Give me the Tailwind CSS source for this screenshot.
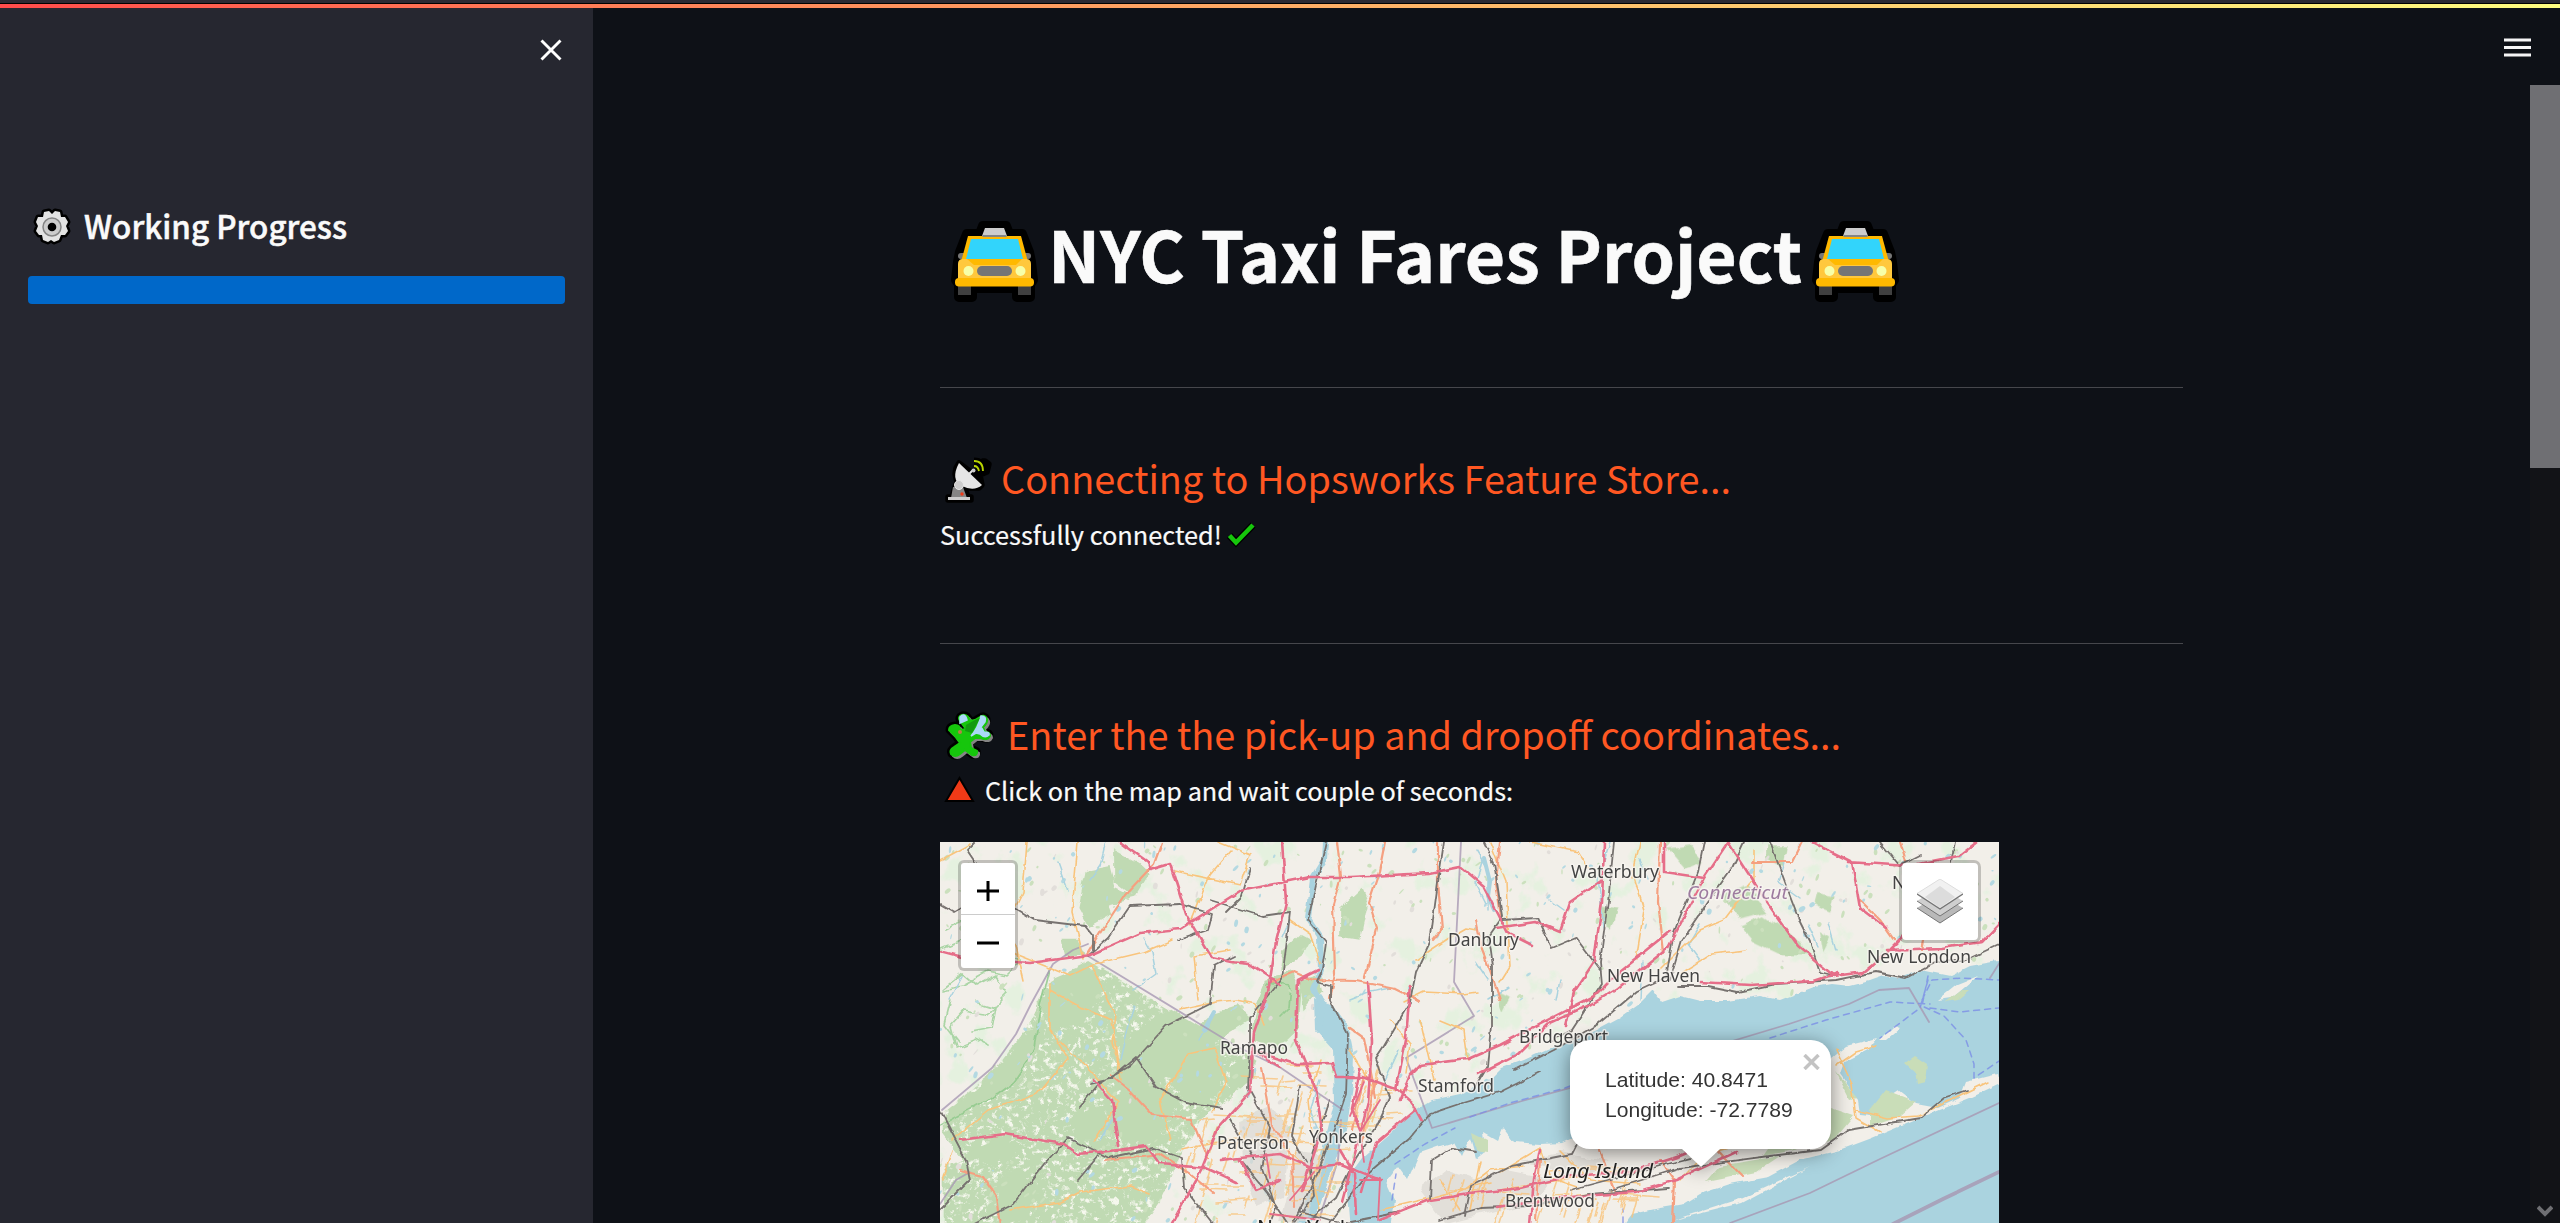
<!DOCTYPE html>
<html lang="en">
<head>
<meta charset="utf-8">
<title>NYC Taxi Fares Project</title>
<script src="https://cdn.jsdelivr.net/npm/@tailwindcss/browser@4"></script>
</head>
<body class="h-[1223px] w-[2560px] overflow-hidden bg-[#0e1117] font-['Noto_Sans_CJK_SC','Noto_Sans',sans-serif] text-[#fafafa]">
<svg width="0" height="0" class="absolute">
  <symbol id="taxi" viewBox="0 0 90 82" overflow="visible">
    <path d="M34 8h23l3 8h13l7 18 2 10 2 18-3 4v13H68V70H23v9H10V66l-3-4 2-18 2-10 7-18h13z" fill="#000" stroke="#000" stroke-width="10" stroke-linejoin="round"/>
    <path fill="#404040" d="M9 65h13v12H9zM69 65h13v12H69z"/>
    <rect x="9" y="35" width="9" height="6" rx="3" fill="#777"/><rect x="73" y="35" width="9" height="6" rx="3" fill="#777"/>
    <path fill="#ffb900" d="M19 18h53l7 26H12z"/><path fill="#32d4fb" d="M22 21h47l5 20H17z"/>
    <path fill="#ffc83d" d="M9 46q0-5 5-5h63q5 0 5 5v17H9z"/><path fill="#ffb900" d="M18 41h55l-6 6H25z"/>
    <rect x="6" y="60" width="79" height="8.500" rx="4" fill="#ffb900"/>
    <rect x="28" y="48" width="35" height="10" rx="5" fill="#757575"/><circle cx="19.500" cy="53" r="5" fill="#f7ffa8"/><circle cx="71.500" cy="53" r="5" fill="#f7ffa8"/>
    <path fill="#ccc" d="M36 10h19l3 8H33z"/><path fill="#858585" d="M33.500 17h24v2h-24z"/>
  </symbol>
</svg>
<div class="flex h-[8px] flex-col">
  <div class="h-[3px] bg-[#2b2a33]"></div><div class="h-px bg-black"></div>
  <div class="h-[4px] bg-linear-to-r from-[#ff4b4b] to-[#fffd80]"></div>
</div>
<div class="flex h-[1215px]">
  <aside class="flex w-[593px] shrink-0 flex-col bg-[#262730] px-[28px]">
    <div class="flex justify-end pt-[31px] pr-[3px]"><svg width="22" height="22" viewBox="0 0 22 22" fill="none" stroke="#fff" stroke-width="2.900" ><path d="M1.500 1.500l19 19M20.500 1.500l-19 19"/></svg></div>
    <div class="mt-[140px] flex h-[52px] items-center pl-[5px]">
      <svg width="38" height="38" viewBox="0 0 38 38"><path d="M11 4l5-1 3 3 3-3 5 1 1 5h4l3 5-2 4 2 5-3 4h-4l-2 5-5 2-3-2-3 2-5-2-1-5H6l-3-4 2-5-2-4 2-5h5z" stroke="#000" stroke-width="5" stroke-linejoin="round"/><path d="M11 4l5-1 3 3 3-3 5 1 1 5h4l3 5-2 4 2 5-3 4h-4l-2 5-5 2-3-2-3 2-5-2-1-5H6l-3-4 2-5-2-4 2-5h5z" fill="#e3e3e3"/><circle cx="19" cy="19" r="9" fill="#ccc" stroke="#858585" stroke-width="1.500"/><circle cx="19" cy="19" r="4.300" fill="#000"/></svg>
      <svg class="ml-[13px] overflow-visible" width="280" height="52"><text x="0" y="38" font-size="32" font-weight="500" textLength="263" lengthAdjust="spacingAndGlyphs" fill="#fafafa" stroke="#fafafa" stroke-width=".5">Working Progress</text></svg>
    </div>
    <div class="mt-[23px] h-[28px] rounded-[4px] bg-[#0068c9]"></div>
  </aside>
  <main class="flex w-[1937px] flex-col pl-[347px]">
    <h1 class="mt-[200px] flex h-[100px] items-start">
      <svg class="mt-[10px] ml-[9px] overflow-visible" width="90" height="82"><use href="#taxi"/></svg>
      <svg class="ml-[9px] overflow-visible" width="758" height="100"><text x="0" y="75" font-size="70" font-weight="700" textLength="754" lengthAdjust="spacingAndGlyphs" fill="#fafafa" stroke="#fafafa" stroke-width=".6">NYC Taxi Fares Project</text></svg>
      <svg class="mt-[10px] ml-[4px] overflow-visible" width="90" height="82"><use href="#taxi"/></svg>
    </h1>
    <div class="mt-[79px] h-px w-[1243px] bg-[#46474c]"></div>
    <div class="mt-[62px] flex h-[60px]">
      <svg width="60" height="60" viewBox="0 0 60 60"><path d="M8 47h4l3-10 2-5-2-8 1-6 3-5 12 9 6-1 8-1-2-9h2l4 3-2 8-7 3 2 10-3 3-11 0-3 1 3 8h3v3H8z" fill="#000" stroke="#000" stroke-width="5.500" stroke-linejoin="round"/><path d="M34 11q9 0 9 10" stroke="#000" fill="none" stroke-width="7"/><path d="M19 13q-9 17 3 23t20-1z" fill="#e6e6e6"/><path d="M27 26l6-6" stroke="#e6e6e6" stroke-width="2"/><circle cx="33.500" cy="20.500" r="2" fill="#ccc"/><path d="M34 11q9 0 9 10M34 16q4 0 5 5" fill="none" stroke="#bbd600" stroke-width="1.800"/><path d="M13 37h10l4 11H11z" fill="#858585"/><circle cx="19" cy="35" r="4.500" fill="#ccc" stroke="#e6e6e6" stroke-width="1"/><circle cx="22" cy="44" r="1.700" fill="#f03a17"/><path d="M8 47h22v3H8z" fill="#ccc"/></svg>
      <svg class="overflow-visible" width="760" height="60"><text x="1" y="44" font-size="38" textLength="730" lengthAdjust="spacingAndGlyphs" fill="#ff5722">Connecting to Hopsworks Feature Store...</text></svg>
    </div>
    <div class="mt-[5px] flex h-[45px]">
      <svg class="overflow-visible" width="286" height="45"><text x="0" y="30" font-size="25" textLength="282" lengthAdjust="spacingAndGlyphs" fill="#fafafa" stroke="#fafafa" stroke-width=".2">Successfully connected!</text></svg>
      <svg width="34" height="45" fill="none"><path d="M3.500 20.500L10 27.500 27 10" stroke="#000" stroke-width="7"/><path d="M3.500 20.500L10 27.500 27 10" stroke="#16c60c" stroke-width="4.500"/></svg>
    </div>
    <div class="mt-[83px] h-px w-[1243px] bg-[#46474c]"></div>
    <div class="mt-[61px] flex h-[60px]">
      <svg width="66" height="60" viewBox="0 0 66 60"><defs><path id="pz" d="M9 25q0-4 6-5 5 0 5 5l6-1-6-8q-3-4 2-6 6-1 8 6l5-1 5-3q5-3 7 2 1 4-4 8l2 5q5 0 5 4-2 5-9 2l-6 0-5 4 1 6 6 3q1 5-5 4l-7-5-5 4q-5 4-9 0-2-4 3-7l6-4-5-7z"/></defs><use href="#pz" stroke="#000" stroke-width="7" stroke-linejoin="round"/><use href="#pz" fill="#858585" stroke="#858585" stroke-width="2" x="2" y="2"/><use href="#pz" fill="#16c60c" stroke="#16c60c" stroke-width="2"/><path d="M20 12q5-5 7 3l-7 3zM41 11q6 0 4 6l-4 5 3 5q6 0 5 3-4 4-9-1l-4-1-5 3q7-8 10-20z" fill="#abd9f7" stroke="#abd9f7" stroke-width="1.500"/><path d="M26 20l9-5 5-2-8 15-7-2z" fill="#129a10"/><circle cx="20" cy="27" r="2" fill="#b97f48"/></svg>
      <svg class="overflow-visible" width="860" height="60"><text x="1" y="45" font-size="38" textLength="834" lengthAdjust="spacingAndGlyphs" fill="#ff5722">Enter the the pick-up and dropoff coordinates...</text></svg>
    </div>
    <div class="mt-[5px] flex h-[40px]">
      <svg width="44" height="40"><path d="M19.500 8L33 31H6z" fill="#f03a17" stroke="#000" stroke-width="2"/></svg>
      <svg class="overflow-visible" width="540" height="40"><text x="1" y="31" font-size="25" textLength="528" lengthAdjust="spacingAndGlyphs" fill="#fafafa" stroke="#fafafa" stroke-width=".2">Click on the map and wait couple of seconds:</text></svg>
    </div>
    <div class="relative mt-[32px] h-[381px] w-[1059px] shrink-0 overflow-hidden bg-[#f2efe9]">
<svg width="1059" height="381" viewBox="940 842 1059 381" fill="none" stroke-linejoin="round" stroke-linecap="round">
<defs>
<filter id="rough" x="-5%" y="-5%" width="110%" height="110%"><feTurbulence type="fractalNoise" baseFrequency=".04" numOctaves="4" seed="4"/><feDisplacementMap in="SourceGraphic" scale="11" xChannelSelector="R" yChannelSelector="G"/></filter>
<filter id="wiggle" x="-5%" y="-5%" width="110%" height="110%"><feTurbulence type="fractalNoise" baseFrequency=".07" numOctaves="3" seed="8"/><feDisplacementMap in="SourceGraphic" scale="5" xChannelSelector="R" yChannelSelector="G"/></filter>
<filter id="grain" x="0" y="0" width="100%" height="100%"><feTurbulence type="fractalNoise" baseFrequency=".06" numOctaves="5" seed="12"/><feColorMatrix values="0 0 0 0 .92  0 0 0 0 .94  0 0 0 0 .85  5 0 0 0 -2.750"/><feComposite in2="SourceAlpha" operator="in"/><feMerge><feMergeNode in="SourceGraphic"/><feMergeNode/></feMerge></filter>
<filter id="patch" x="0" y="0" width="100%" height="100%"><feTurbulence type="fractalNoise" baseFrequency=".035 .03" numOctaves="5" seed="21"/><feColorMatrix values="0 0 0 0 .78  0 0 0 0 .88  0 0 0 0 .74  0 8 0 0 -4.700"/><feComposite in2="SourceAlpha" operator="in"/></filter>
</defs>
<rect x="940" y="842" width="1059" height="381" fill="#f2efe9"/>
<g filter="url(#patch)"><rect x="940" y="842" width="1059" height="381" fill="#fff"/></g>
<!-- woodland -->
<g filter="url(#rough)"><g transform="translate(932 832) scale(.35714 .33333)" fill="#c0dab3">
 <g filter="url(#grain)"><path d="M30 840L170 720 260 600 330 450 440 390 820 630 910 690 900 740 830 800 760 850 700 960 640 1100 580 1190H30V1000l60-20-60-80z"/></g>
 <path d="M340 440l90-40 50 60-60 110-80 30-30-80zM560 600l110-70 140 90-40 60-120 60-70 70-80-60zM510 790l90-60 90 80-60 120-100 10-30-90zM660 720l60-70 90 10 0 120-60 50-70-60zM30 850l130-110 110-130 50-70-20 120-120 130-140 80zM390 860l90-40 40 90-110 20zM430 120l70-15 15 60 60 30-80 20 10 30-65 40-30-60zM510 55l70 40 30 30-40 70-60-50zM980 350l50-50 35 20-30 60-60 40zM940 440l70-20 25 60-10 110-60 60-70-30 15-100zM1030 440l50-15 10 50-50 60zM1140 230l60-60 20 50-20 100-60-10zM360 320l50 0 20 50-60 10zM100 960l90-40 50 30-80 50zM180 1060l60-40 60 60-40 80-70 20z"/>
 <path d="M740 590l50-50 60-20 40 40-60 40-20 30zM840 700l60-20 0 60-60 40z"/>
</g>
<g transform="translate(1472 832) scale(.34439 .33333)" fill="#c0dab3"><path d="M860 40h60l-10 60-50-20zM720 190l80-30 60 80-80 20zM780 280l70-30 70 50 60 70-80 0-80-40zM370 220l50 10-20 60-30-20zM70 480l40 20-20 40zM1000 180l50 10-10 50-50-20zM1010 300l30 20-20 40zM570 50l60-10 40 50-50 20z"/></g></g>
<g fill="none" filter="url(#rough)" stroke="#9fd09a" stroke-width="1.700" opacity=".85"><path d="M942 950l20-8 20 12 24-6 16 14-14 14-20-4-26 14-18 4M944 988l18-14 14 12 20-10 12 18-20 20-24-4-14 16 6 22 20-8 12 6M950 1000l-6 24 14 18M976 1000l20 6-4 22-22 4M945 930l20-10 24 10 18-4"/><path d="M1050 970l-12 50-4 30-20 30-30 22-44 24M1270 982l20 4-2 22-10 10" stroke="#8fc98b"/></g>
<g id="specks"></g>
<!-- water -->
<g filter="url(#wiggle)" fill="#aad3df">
<path d="M1392 1132L1414 1111 1432 1100 1460 1094 1490 1080 1502 1068 1524 1060 1548 1049 1570 1042 1596 1030 1620 1017 1640 1003 1653 990 1662 1002 1680 996 1700 1001 1728 1001 1760 996 1780 1000 1814 987 1832 984 1850 986 1870 981 1884 976 1900 978 1920 970 1950 976 1970 966 2004 960V1230H1350L1346 1180 1362 1158z"/>
<path d="M1314 998l20 8 14 20 6 30-1 30-6 40-12 36-16 46-14 26 -12 0 20-50 12-44 10-40-2-50-18-20z"/>
</g>
<!-- Long Island, its forks and the barrier beaches -->
<g filter="url(#wiggle)">
<path fill="#f2efe9" d="M1390 1230L1394 1200 1386 1182 1398 1166 1408 1180 1420 1153 1440 1146 1454 1142 1462 1156 1470 1138 1476 1158 1486 1150 1484 1132 1498 1140 1503 1128 1514 1142 1540 1144 1563 1143 1590 1130 1640 1110 1700 1080 1780 1066 1826 1062 1846 1046 1878 1038 1868 1050 1844 1062 1840 1074 1858 1100 1860 1114 1880 1116 1886 1098 1898 1090 1916 1104 1938 1108 1960 1098 1966 1082 1998 1074 2000 1084 1970 1098 1920 1118 1872 1138 1840 1150 1800 1160 1768 1177 1730 1184 1700 1194 1684 1204 1660 1208 1632 1214 1620 1230z"/>
<path fill="#f2efe9" d="M1670 1221l70-22 70-32-68 36zM1938 1000l20-16 20-8-26 22zM1880 1040l14-14 6 2-14 12z"/>
<path fill="#c9ddb8" d="M1905 1063l10-7 12 8-2 18-8 2-2-12zM1870 1110l16-20 30 12-16 14-30 10zM1790 1120l40-12 24 8-20 24-50 12-20 4zM1472 1132l16 8 0 12-12-2zM1836 1072l22 26-8 2zM1720 1166l60-10-24 16-50 10zM1946 1002l16-12 8 0-12 10z"/>
</g>
<g fill="#dcd9d3" opacity=".7" filter="url(#rough)"><path d="M1240 1120l30-14 20 30-8 60-24 10-14-30zM1420 1190l26-20 30 10 30-10 50 10-30 24-80 20zM1295 1150l30 6-20 66h-26zM1520 1160l40-8 50 10-30 14z"/></g>
<!-- rivers and boundaries -->
<g stroke="#aad3df" filter="url(#wiggle)"><path stroke-width="6" d="M1325 842l-1 18-11 18-5 40 12 18 1 35-8 18 11 16-5 20"/><path stroke-width="1.500" d="M1106 842l-6 24-10 14M1134 990l22-16-4-22-8-14M1120 1060l6-28 8-26M1200 1040l12-22M1100 1140l14-24M1290 920l-8 18M1476 850l12 20 0 40M1488 980l-12-18M1550 900l14 10M1610 842l-12 36 6 50M1640 1000l2-38M1784 862l-6 20 22 16M1808 924l10 22M1836 950l-8-28M1350 1000l20-8 20-4M1700 960l-12-16 12-20M1640 860l8 20M1488 1000l20-12M950 1000l12-22M1068 890l-10-28M1320 1080l-10 30 8 20M1398 1050l-14 30M1482 860l-6 24 10 20M1560 980l-4 20M1000 870l-4 22"/></g>
<path d="M1484 858l6 24-2 14 6 14M1204 1030l10-18" stroke="#aad3df" stroke-width="4"/>
<g stroke="#a898b3" opacity=".8" stroke-width="1.800"><path d="M1088 956l148 90 45 22 62 42M1461 842l-7 140 20 34-68 42 26 70 90-27 107-29 160-48 60-20 30-14 30-2 20 34M2000 962l-10 16M942 1110l50-42 24-34 15-30 22-40 20-14 15-6M940 1204l16-24 14-8M1730 1223l80-30 70-34 119-56"/><path stroke-width="3.800" d="M1893 1224l50-25 56-27"/><path d="M1341 1120l-3 40-20 63" stroke-width="2"/></g>
<g stroke="#7c8ee6" stroke-width="1.500" stroke-dasharray="6 5" opacity=".8"><path d="M1470 1117l40-14 55-15 64-25M1770 1038l56-18 64-18 40 2M1928 980l-8 28-40 30M1928 976l-6 30 22 10 22 24 8 24 0 14 25-17M1930 1008l30 4 39-4M1395 1164l30-20 30-16M1922 1000l10-20 30-2 37 2M1623 1223v-14M1392 1200l4-26"/></g>
<!-- local roads -->
<g stroke="#f9c47c" stroke-width="1.600" filter="url(#wiggle)"><g id="streets" opacity=".8"></g>
<path d="M1027 842l-4 50-14 28 14 60M1078 842l-6 70 12 46M940 860l30-16M980 958l30-6 60 24 24-12 50-12 28-12M1050 984l0 46 18 28-30 36-50 16-36 30M1092 965l24 50-4 28 10 30M1060 1042l32 30 26 30-24 40M1050 990l32 18 30 12 8 60M1170 1140l-10-40 28-46 26-6 12 34-14 30M1174 871l66 14 10-30-32-13M1190 925l20-50 20-24M1180 1010l36-8 20-2 20 4 8 20M1198 1000l-4-44 36-6M1322 1060l-14 40 6 50M1350 1050l24 40M1404 1002l20-10 40 2 14-2M1416 960l36-24 14-8 10 2M1490 842l16 40 4 84-10 16M1530 842l48 10 10 16M1632 870l12 40-8 50M1640 842l-8 36M1660 970l40-40 24-10 30-40 0-30M1680 974l32-20 34-4M1836 1050l16 34 4 34 24 14M1836 1066l20-14 20-6M1856 1110l32 8 30-2 70-34M1500 1172l40-24 10 30 30 10M1450 1200l40-30 34-4M1500 1190l120-20M1380 1210l50-12 60-16M1264 1130l46 40 10 40M1180 1150l50-10M1010 1210l50-8 20-10 50-6 20 8M1420 1020l14 60M1440 1020l24 10 4 30M1680 1180l26-26 30-8M1290 920l20 14 10 30M1390 1020l20 24-4 30M942 1180l10-30M1440 1180l20 30M1480 1160l-10 50M1560 1150l30 30 50 4"/></g>
<g stroke="#f5a080" stroke-width="2.200" filter="url(#wiggle)"><path d="M1162 842l-8 22-28 30-24 36-16 26M1337 842l4 34-8 28 2 70-6 24M1385 842l-6 30-10 30 8 26-12 50M1270 982l24-10 18 8 44 1 40 8 24 12M1110 1075l20 16 22 24 40 4 16 40M1438 842l0 40 4 48-8 10M1500 842l-4 40 6 40M1660 842l-2 60 6 50M1752 862l40 0 10-20M1860 900l20 20 14 20M960 1170l22 6 14 20 4 30M1262 1066l10 60 20 30 2 50M1660 1160l14 20-2 42M1540 1160l-4 60M1600 1150l14 40M1350 1028l14 10 6 30 6 30M1476 920l6 30 8 20 10 30M1708 1140l34 36M1104 1160l56-6 30 20 24 20M1900 842l6 20M1362 1080l-10 50M1376 1080l-14 60M1920 950l4-20"/></g>
<!-- railways -->
<g stroke="#77726f" stroke-width="1.800" filter="url(#wiggle)"><path d="M975 842l-8 8 8 12 40 46 20 12 50 6 8 10 0 14M940 904l14 8 10-6M1088 956l20-18 22-32 50-2 32 10-4 16-30 10M1226 912l16-16 8-28M1210 900l52 16 28-4 -4 36-4 30-32 40 0 30-2 40 22 40-8 40 14 40-8 20M1326 842l-18 78 18 22-4 28-6 12 14 4 0 14 18 34-2 60-12 36-22 56-24 46M1234 956l-20 10-4 38-44 22-36 40-34 20-18 22M1090 1084l20-5 26-22 20 30 30 16 36 6M940 1110l26 50 4 20-30 30M974 1224l40-20 30-40 24-26 40 20 46-10 28 10 2 30 30 38M1078 1180l20-24M1444 842l-6 40-8 60-14 30-6 30-26 44-8 12 14 40-14 30-20 30-20 40-36 30M1540 1072l-40 20-40 12-30 10-22 26-40 34-40 52M1484 842l10 20 8 54-14 20 4 30 0 60-4 40-12 20M1502 920l36-2 14 30 24-10 24 32M1614 842l-6 60-8 60 2 22-30 46-20 10M1704 842l-6 30-24 60-8 46-30 14-38 32-44 26-40 20M1670 980l12-40 30-44 20-28 12-26M1770 842l30 80 10 20 10 30 16 4M1678 986l30 0 30 6 38-8 60-4 40-8 30 6 30-16 30-2 34-16M1880 842l20 24 20-10M1955 842l-4 20M1430 1200l2-40 20-12 24 4M1465 1216l6-30 40-20 60-12 10-20M1570 1190l60-16 60-16M1610 1190l70-22 90-12 50-6 28-20 72-12 24-20 24-8M1440 1220l40-12 50-2 60-12 80-6M1300 1086l-8 50 14 26M1330 1100l-20 60 4 36-20 28M1240 1160l28 34 20 30M1230 1120l24 40M1300 1212l40 12 60-12"/></g>
<!-- motorways -->
<g stroke="#e66e89" stroke-width="2.600" filter="url(#wiggle)"><path d="M1120 842l28 20 2 8 20-6 16 50 26 44 18 4 20 2 30 20M940 951l30 8 60 4 60-8 50-22 40-4 60-38 70-14 40 0 80-4 30-6 24 20 24 46 24 12M1282 842l4 60-10 40-8 50-14 40-4 60-32 36-16 40-24 44-32 60M960 1140l44-6 60 10 14 10 40-4 28-4 14 18 46 4 30 14M1094 1080l18 20 6 46M1280 1067l-24-15M1318 970l-20 10-2 60 20 50 6 40-20 60M1260 1053l36 11 36-1 4 14 26 0 34 12 16 14 10 18M1368 982l4 60-4 60-10 40-16 60M1400 1100l10-25 10-10 48-6 32-14 46-24 50-26 24-24 50-40M1410 985l-4 55-10 50M1496 928l40-6 24 10 10-30 32-22M1604 842l-2 60-8 60-20 30-8 34M1664 842l0 30 40 6 24-36M1704 878l-36 70-50 40-26 16-44 20-30 30-40 20M1728 842l40 62 30 42 36 30 30-4 26-22 20-20M1700 982l50 3 64-4 24-8M1812 842l40 20 8 46 26 20M1848 862l60 4 50-10 18-14M1886 950l56-2 40-6 17-18M1380 1220l50-20 40-6 50-6 50-12 60-4 50-16 40-18 50-6M1496 1208l60-10 80-6 40-12 60-28M1340 1150l14 24 2 40M1240 1160l16 30 24-10M1220 1160l60-6 30 14 30-4 40 16M1416 1109l-40 34-14 50M1540 1150l-6 30-4 44M1360 1070l-8 40 8 20"/></g>
<g stroke="#e66e89" stroke-width="1.800"><path d="M1266 1154l4 24M1290 1200l24-28M1380 1100l-20 32 4 30M1270 1214l50 6M1360 1180l20 0-2 40M1350 1116l14-34M1336 1077h18"/></g>
<g font-family="'Noto Sans',sans-serif" font-size="18" fill="#444" stroke="#f8f5f0" stroke-opacity=".8" stroke-width="3" paint-order="stroke">
<text x="1571" y="878" textLength="88" lengthAdjust="spacingAndGlyphs">Waterbury</text>
<text x="1687" y="899" textLength="101" lengthAdjust="spacingAndGlyphs" font-style="italic" fill="#9d7b9f">Connecticut</text>
<text x="1448" y="946" textLength="71" lengthAdjust="spacingAndGlyphs">Danbury</text>
<text x="1607" y="982" textLength="93" lengthAdjust="spacingAndGlyphs">New Haven</text>
<text x="1867" y="963" textLength="104" lengthAdjust="spacingAndGlyphs">New London</text>
<text x="1519" y="1043" textLength="89" lengthAdjust="spacingAndGlyphs">Bridgeport</text>
<text x="1418" y="1092" textLength="76" lengthAdjust="spacingAndGlyphs">Stamford</text>
<text x="1220" y="1053.500" textLength="68" lengthAdjust="spacingAndGlyphs">Ramapo</text>
<text x="1309" y="1142.500" textLength="64" lengthAdjust="spacingAndGlyphs">Yonkers</text>
<text x="1217" y="1149" textLength="72" lengthAdjust="spacingAndGlyphs">Paterson</text>
<text x="1543" y="1177.500" textLength="110" lengthAdjust="spacingAndGlyphs" font-style="italic" font-size="20" fill="#222">Long Island</text>
<text x="1505" y="1207" textLength="90" lengthAdjust="spacingAndGlyphs">Brentwood</text>
<text x="1892" y="889">N</text>
<text x="1257" y="1236" textLength="94" font-size="21" fill="#222">New York</text>
</g>
</svg>
      <div class="absolute top-[18px] left-[18px] flex h-[111px] w-[60px] flex-col overflow-hidden rounded-[6px] border-[3px] border-black/20 bg-white bg-clip-padding text-black">
        <div class="flex h-[52px] items-center justify-center border-b border-[#ccc] pt-[4px]"><svg width="22" height="22" stroke="#000" stroke-width="3"><path d="M0 11h22M11 1v20"/></svg></div>
        <div class="flex h-[53px] items-center justify-center"><svg width="22" height="22" stroke="#000" stroke-width="3"><path d="M0 12h22"/></svg></div>
      </div>
      <div class="absolute top-[18px] left-[959px] flex h-[83px] w-[82px] items-center justify-center rounded-[7px] border-[3px] border-black/20 bg-white bg-clip-padding">
        <svg width="46" height="45" viewBox="0 0 46 45"><g stroke="#747474" stroke-width="1"><path d="M0 29l23 15 23-15-23-14z" fill="#b9b9b9" stroke="none"/><path d="M0 29l23 15 23-15" fill="none"/><path d="M0 22l23 15 23-15-23-14z" fill="#cfcfcf" stroke="none"/><path d="M0 22l23 15 23-15" fill="none"/><path d="M0 14.500l23 15 23-15L23 0z" fill="#f1f1f1" stroke="#ddd"/><path d="M8 18l15-11 15 11-15 11z" fill="#dcdcdc" stroke="none"/><path d="M0 15l23 15 23-15" fill="none" stroke-width="1.300"/></g></svg>
      </div>
      <div class="absolute top-[198px] left-[630px] h-[127px] w-[261px] drop-shadow-[0_4px_10px_rgba(0,0,0,0.45)]">
        <div class="relative h-[109px] rounded-[20px] bg-white pt-[25px] pl-[35px] font-['Liberation_Sans',sans-serif] text-[21.100px] leading-[30px] whitespace-nowrap text-[#333]">
          <div>Latitude: 40.8471</div><div>Longitude: -72.7789</div>
          <svg class="absolute top-[14px] right-[11px]" width="17" height="16" stroke="#c3c3c3" stroke-width="3.500"><path d="M1.500 1l14 14M15.500 1l-14 14"/></svg>
        </div>
        <svg class="ml-[112px]" width="38" height="18"><path d="M0 0h38L19 18z" fill="#fff"/></svg>
      </div>
    </div>
  </main>
  <div class="flex w-[30px] flex-col items-center bg-[#121317]">
    <div class="h-[77px] w-full bg-[#0e1117]"></div>
    <div class="h-[383px] w-full bg-[#6f6f73]"></div>
    <svg class="mt-auto mb-[4px]" width="16" height="14" fill="none" stroke="#6f6f73" stroke-width="4"><path d="M1 2l7 7 7-7"/></svg>
  </div>
</div>
<svg class="absolute top-[38px] left-[2504px]" width="27" height="20" stroke="#f5f5f6" stroke-width="3"><path d="M0 2h27M0 9.500h27M0 17h27"/></svg>
<script>
// Seeded minor streets, ponds and small woods for the base map.
let s = 7; const r = () => (s = (s * 16807) % 2147483647) / 2147483647;
let out = '';
for (let i = 0; i < 900; i++) {
  const x = 940 + r() * 1059, y = 842 + r() * 381, k = r();
  const c = k < .45 ? '#b4d9e2' : k < .85 ? '#cbe0bd' : '#e2deda';
  out += `<ellipse cx="${x.toFixed(1)}" cy="${y.toFixed(1)}" rx="${(.6 + r() * 1.8).toFixed(1)}" ry="${(.8 + r() * 3).toFixed(1)}" fill="${c}" transform="rotate(${(r() * 60) | 0} ${x.toFixed(1)} ${y.toFixed(1)})"/>`;
}
document.getElementById('specks').innerHTML = out;
out = '';
const areas = [[1190, 1110, 150, 110, 60], [1360, 1060, 30, 80, 12], [1440, 1165, 200, 42, 36], [1240, 1060, 70, 80, 18]];
for (const [ax, ay, w, h, n] of areas) for (let i = 0; i < n; i++) {
  const x = ax + r() * w, y = ay + r() * h, v = r() < .5, l = 12 + r() * 26;
  out += `<path d="M${x.toFixed(0)} ${y.toFixed(0)}l${(v ? -l * .3 : l).toFixed(0)} ${(v ? l : l * .15 - 3).toFixed(0)}"/>`;
}
document.getElementById('streets').innerHTML = out;
</script>
</body>
</html>
